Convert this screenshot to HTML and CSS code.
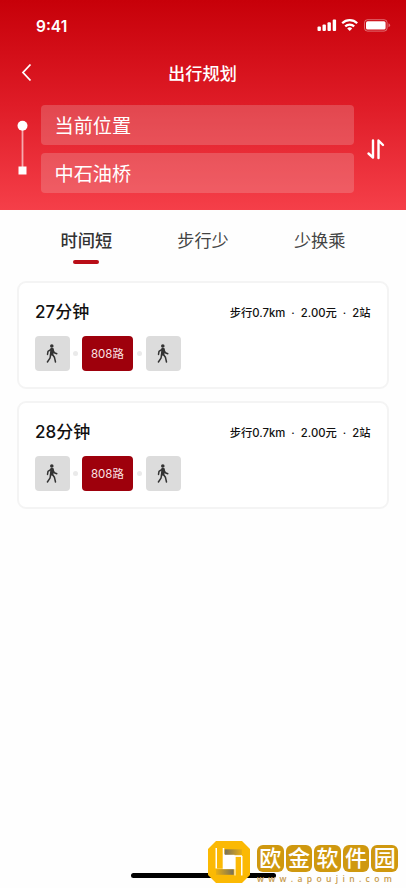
FILE: index.html
```html
<!DOCTYPE html>
<html lang="zh-CN">
<head>
  <meta charset="UTF-8">
  <meta name="viewport" content="width=device-width, initial-scale=1.0">
  <title>出行规划</title>
  <link rel="stylesheet" href="styles.css">
</head>
<body>

  <svg class="sprite" aria-hidden="true">
    <symbol id="walk" viewBox="0 0 12 20">
      <circle cx="5.8" cy="2" r="1.8"/>
      <path d="M5.2 4.6 7.1 5.1 6.5 10.5 8.4 13.2 9.5 18M4.6 11 4 14.2 1.4 18M5 5.4 2 7.4 1.5 10.4M7 6.2 8.3 8.7 10.8 9.7" fill="none" stroke="#333" stroke-width="1.5" stroke-linecap="round" stroke-linejoin="round"/>
      <path d="M4 4.7 7 4.4 7.7 6.4 7 11.5H3.7L4.2 7z"/>
    </symbol>
  </svg>

  <header class="header">
    <div class="status">
      <span class="time">9:41</span>
      <svg class="status-icons" width="74" height="16" viewBox="0 0 74 16" fill="#fff">
        <rect x="0.500" y="9.500" width="3.400" height="4.500" rx="1"/>
        <rect x="5.500" y="7.500" width="3.400" height="6.500" rx="1"/>
        <rect x="10.500" y="5.200" width="3.400" height="8.800" rx="1"/>
        <rect x="15.700" y="2.500" width="3.400" height="11.500" rx="1"/>
        <g fill="none" stroke="#fff" stroke-width="2.200">
          <path d="M25.200 6.300a10.600 10.600 0 0 1 15 0"/>
          <path d="M28.200 9.400a6.400 6.400 0 0 1 9 0"/>
        </g>
        <path d="M30.200 11.400a3.700 3.700 0 0 1 5 0L32.700 14z"/>
        <rect x="47.500" y="2.700" width="22.600" height="11.400" rx="3" fill="none" stroke="#fff" stroke-opacity=".4"/>
        <rect x="49" y="4.200" width="19.600" height="8.400" rx="1.600"/>
        <path d="M71.500 6.300v4q1.600-.6 1.600-2t-1.600-2z" fill-opacity=".4"/>
      </svg>
    </div>

    <div class="nav">
      <svg class="back" width="12" height="20" viewBox="0 0 12 20" fill="none" stroke="#fff" stroke-width="1.800">
        <path d="M10.500 1.500 3 9.500l7.500 8"/>
      </svg>
      <h1>出行规划</h1>
    </div>

    <div class="search">
      <svg class="route-line" width="12" height="56" viewBox="0 0 12 56" fill="#fff">
        <path d="M6.500 6v44" stroke="#fff" stroke-opacity=".6" stroke-width="1.800"/>
        <circle cx="6.500" cy="5.700" r="5"/>
        <rect x="2.500" y="46.500" width="8" height="8"/>
      </svg>
      <div class="fields">
        <div class="field">当前位置</div>
        <div class="field">中石油桥</div>
      </div>
      <svg class="swap" width="20" height="22" viewBox="0 0 20 22" fill="none" stroke="#fff" stroke-width="2.400" stroke-linecap="round" stroke-linejoin="round">
        <path d="M7 2.500V19.500L2.500 15.500M12.500 20V2.500L17 7"/>
      </svg>
    </div>
  </header>

  <nav class="tabs">
    <a class="tab active">时间短</a>
    <a class="tab">步行少</a>
    <a class="tab">少换乘</a>
  </nav>

  <main class="list">
    <section class="card">
      <div class="card-head">
        <h2>27分钟</h2>
        <span class="info">步行0.7km&nbsp; · &nbsp;2.00元&nbsp; · &nbsp;2站</span>
      </div>
      <div class="steps">
        <span class="walk"><svg width="12" height="20"><use href="#walk"/></svg></span>
        <i class="dot"></i>
        <span class="bus">808路</span>
        <i class="dot"></i>
        <span class="walk"><svg width="12" height="20"><use href="#walk"/></svg></span>
      </div>
    </section>

    <section class="card">
      <div class="card-head">
        <h2>28分钟</h2>
        <span class="info">步行0.7km&nbsp; · &nbsp;2.00元&nbsp; · &nbsp;2站</span>
      </div>
      <div class="steps">
        <span class="walk"><svg width="12" height="20"><use href="#walk"/></svg></span>
        <i class="dot"></i>
        <span class="bus">808路</span>
        <i class="dot"></i>
        <span class="walk"><svg width="12" height="20"><use href="#walk"/></svg></span>
      </div>
    </section>
  </main>

  <div class="home-bar"></div>

  <div class="watermark">
    <svg width="42" height="44" viewBox="0 0 42 44">
      <defs>
        <linearGradient id="shade" x1="0" y1="0" x2="1" y2="0">
          <stop offset="0" stop-color="#77705a"/>
          <stop offset="1" stop-color="#e8ae12"/>
        </linearGradient>
        <linearGradient id="shade2" x1="1" y1="0" x2="0" y2="0">
          <stop offset="0" stop-color="#77705a"/>
          <stop offset="1" stop-color="#e8ae12"/>
        </linearGradient>
      </defs>
      <path d="M8 1h26l8 8v26l-8 8H8l-8-8V9z" fill="#fbb904"/>
      <path d="M7.500 8H15.500V14H26.500V16H34.500V35.500H26.500V28.500H7.500z" fill="#fff"/>
      <path d="M9 8h6v20.500H9zM27.500 16.500h5.500V36h-5.500z" fill="#fbb904"/>
      <path d="M15.500 8v20.500h11V16H34" fill="none" stroke="#fff" stroke-width="1.600"/>
      <path d="M16.700 9.300h17.300v5.500H16.700z" fill="url(#shade)"/>
      <path d="M8 29.300h17.700v5.500H8z" fill="url(#shade2)"/>
    </svg>
    <div class="brand">
      <div class="brand-name"><span>欧</span><span>金</span><span>软</span><span>件</span><span>园</span></div>
      <div class="brand-url">www.apoujin.com</div>
    </div>
  </div>

</body>
</html>
```
FILE: styles.css
```css
* {
  box-sizing: border-box;
}

body {
  margin: 0;
  height: 888px;
  position: relative;
  overflow: hidden;
  background: #fefefe;
  font-family: "Liberation Sans", "Noto Sans CJK SC", sans-serif;
  color: #111;
}

h1, h2 {
  margin: 0;
}

.sprite {
  position: absolute;
  width: 0;
  height: 0;
}

.header {
  height: 210px;
  background: linear-gradient(#c70009, #df1c27 50%, #f53f49);
  color: #fff;
}

.status {
  height: 50px;
  padding: 17px 15px 0 36px;
  display: flex;
  justify-content: space-between;
}

.time {
  font: 600 15.5px/19px Inter, sans-serif;
}

.nav {
  height: 46px;
  padding: 0 20px;
  display: flex;
  align-items: center;
}

.nav h1 {
  flex: 1;
  padding: 0 13px 2px 0;
  text-align: center;
  font-size: 17.2px;
  font-weight: 500;
}

.search {
  display: flex;
  padding: 9px 20px 0 16px;
}

.route-line {
  margin-top: 15px;
}

.fields {
  width: 313px;
  margin: 0 12px 0 13px;
  display: flex;
  flex-direction: column;
  gap: 8px;
}

.field {
  height: 40px;
  padding-left: 13.5px;
  border-radius: 4px;
  background: rgba(238, 190, 190, 0.27);
  font-size: 19.2px;
  line-height: 43px;
}

.swap {
  margin-top: 33px;
}

.tabs {
  height: 71px;
  padding: 18px 28px 0;
  display: flex;
}

.tab {
  flex: 1;
  display: flex;
  flex-direction: column;
  align-items: center;
  font-size: 17.2px;
  line-height: 26px;
  color: #444;
}

.tab.active {
  font-weight: 500;
  color: #333;
}

.tab.active::after {
  content: "";
  width: 26px;
  height: 4px;
  margin-top: 6px;
  border-radius: 2px;
  background: #b90d17;
}

.list {
  padding: 0 17px;
  display: flex;
  flex-direction: column;
  gap: 12px;
}

.card {
  height: 108px;
  padding: 15px 16px 0;
  border: 2px solid #f4f4f4;
  border-radius: 9px;
  background: #fff;
}

.card-head {
  height: 28px;
  display: flex;
  align-items: center;
  justify-content: space-between;
}

.card-head h2 {
  font: 500 17px/28px Inter, "Noto Sans CJK SC", sans-serif;
}

.info {
  padding: 2px 0.5px 0 0;
  font: 500 11.3px/28px Inter, "Noto Sans CJK SC", sans-serif;
}

.steps {
  margin-top: 10px;
  display: flex;
  align-items: center;
}

.walk, .bus {
  height: 35px;
  display: flex;
  align-items: center;
  justify-content: center;
  border-radius: 4px;
}

.walk {
  width: 34.5px;
  background: #dcdcdc;
  fill: #333;
}

.bus {
  width: 51px;
  padding-bottom: 1px;
  background: #9e000c;
  color: #fbe3e5;
  font: 11.5px Inter, "Noto Sans CJK SC", sans-serif;
}

.dot {
  width: 5px;
  height: 5px;
  margin: 0 4px;
  border-radius: 50%;
  background: #eaeaea;
}

.steps .dot:first-of-type {
  margin-left: 3.5px;
}

/* overlays at the bottom of the screen */
.home-bar {
  position: absolute;
  left: 131px;
  bottom: 10px;
  width: 145px;
  height: 5px;
  border-radius: 3px;
  background: #000;
}

.watermark {
  position: absolute;
  left: 208px;
  top: 840px;
  display: flex;
}

.brand {
  margin: 5px 0 0 7px;
}

.brand-name {
  display: flex;
  gap: 2px;
}

.brand-name span {
  width: 26.6px;
  height: 27px;
  border-radius: 6px;
  background: #cf980f;
  color: #fff;
  font-size: 22px;
  font-weight: 500;
  line-height: 28px;
  text-align: center;
}

.brand-url {
  font: 600 8.5px/13px "Open Sans", sans-serif;
  letter-spacing: 4.35px;
  color: #c79a4b;
  white-space: nowrap;
}
```
